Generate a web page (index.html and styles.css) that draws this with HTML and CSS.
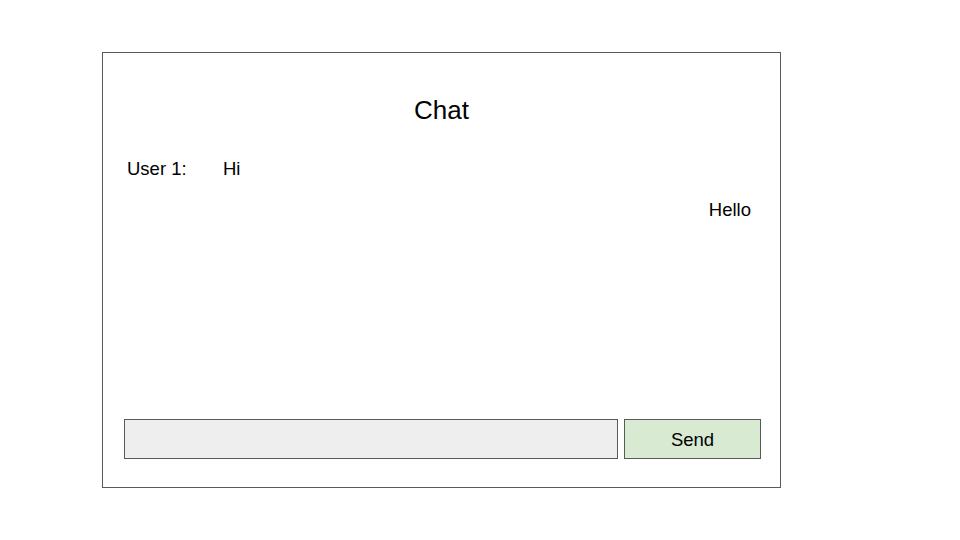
FILE: index.html
```html
<!DOCTYPE html>
<html>
<head>
<meta charset="utf-8">
<link rel="stylesheet" href="styles.css">
</head>
<body>
<div class="frame">
  <div class="title">Chat</div>
  <div class="messages">
    <div class="msg msg-left"><span class="label">User 1:</span><span class="text">Hi</span></div>
    <div class="msg msg-right"><span class="text">Hello</span></div>
  </div>
  <div class="composer">
    <div class="input"></div>
    <div class="send">Send</div>
  </div>
</div>
</body>
</html>
```
FILE: styles.css
```css
html, body {
  margin: 0;
  padding: 0;
  background: #ffffff;
}
body {
  font-family: "Liberation Sans", Arial, sans-serif;
  color: #000000;
  padding: 52px 0 0 102px;
}
.frame {
  box-sizing: border-box;
  width: 679px;
  height: 436px;
  border: 1px solid #595959;
  padding: 42px 19px 28px 21px;
  display: flex;
  flex-direction: column;
}
.title {
  font-size: 26px;
  line-height: 30px;
  text-align: center;
  padding-right: 2px;
}
.messages {
  flex: 1;
  display: flex;
  flex-direction: column;
  padding-top: 33px;
  gap: 19px;
}
.msg {
  font-size: 18.5px;
  line-height: 22px;
  display: flex;
}
.msg-left {
  padding-left: 3px;
}
.msg-right {
  justify-content: flex-end;
  padding-right: 10px;
}
.label {
  width: 96px;
}
.composer {
  display: flex;
  gap: 6px;
  height: 40px;
}
.input {
  box-sizing: border-box;
  width: 494px;
  height: 40px;
  background: #eeeeee;
  border: 1px solid #595959;
}
.send {
  box-sizing: border-box;
  width: 137px;
  height: 40px;
  padding-top: 1px;
  background: #d9ead3;
  border: 1px solid #595959;
  font-size: 18.5px;
  display: flex;
  align-items: center;
  justify-content: center;
}
```
